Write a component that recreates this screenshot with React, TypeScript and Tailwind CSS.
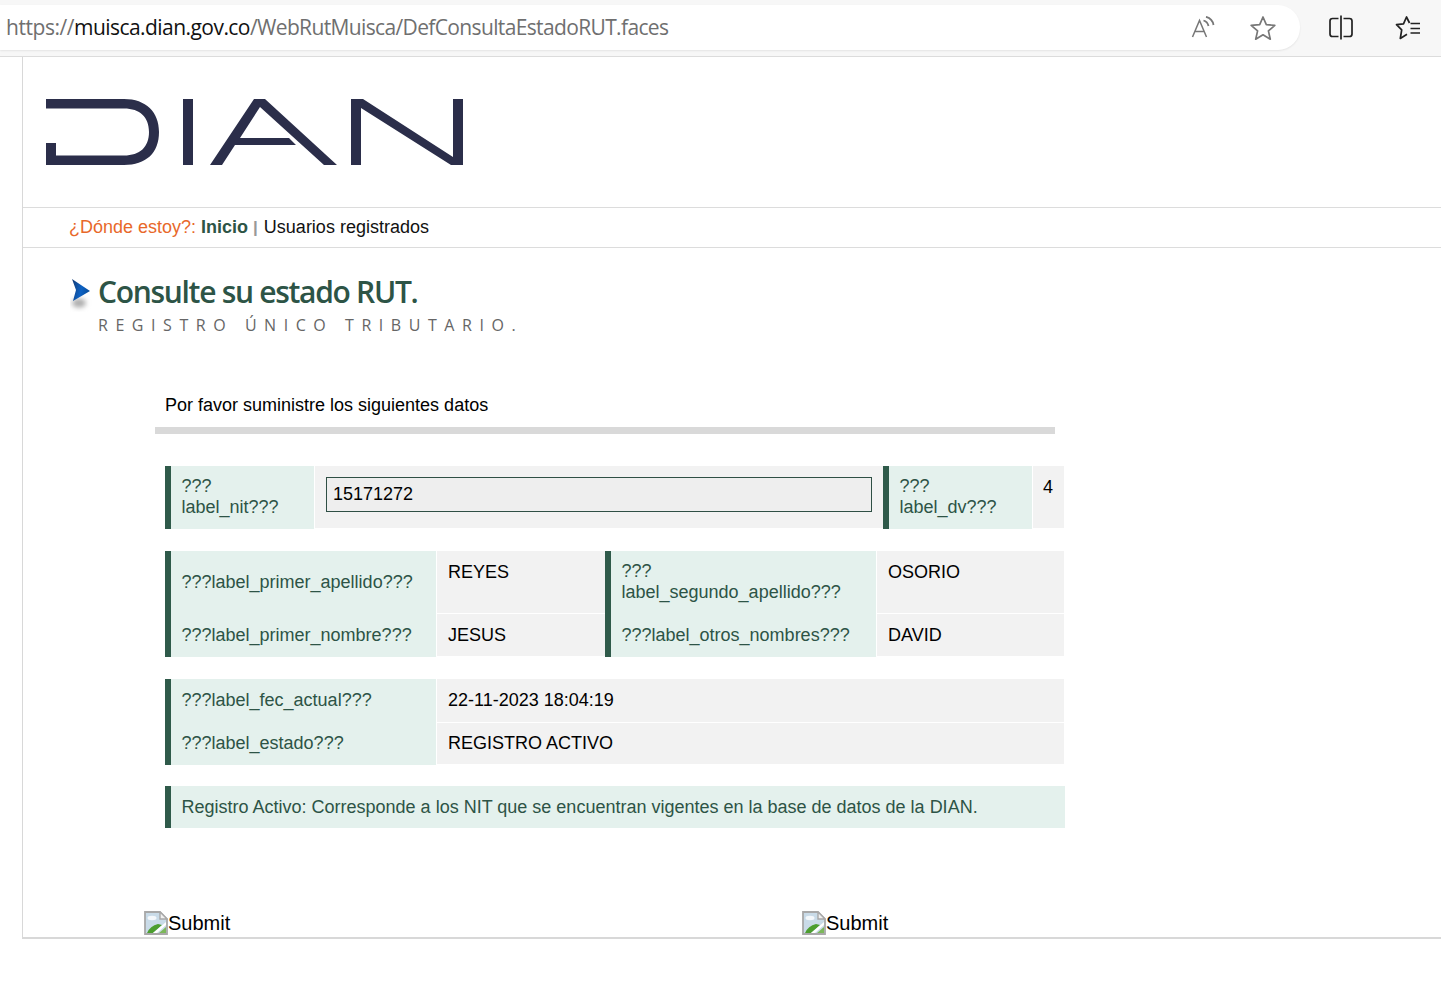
// App.tsx
function ReadAloudIcon() {
  return (
    <svg width="24" height="24" viewBox="0 0 24 24" fill="none" stroke="#777" strokeWidth="1.5" className="shrink-0">
      <path d="M1.500 21 L8.500 4.500 L15.500 21 M3.800 15.500 H13.200" />
      <path d="M12.500 4.500 Q16.500 5.500 17.500 10" strokeWidth="1.8" />
      <path d="M15 0.800 Q21.500 2.500 22.500 9" strokeWidth="1.8" />
    </svg>
  )
}

function StarIcon() {
  return (
    <svg width="26" height="26" viewBox="0 0 26 26" fill="none" stroke="#777" strokeWidth="1.7" strokeLinejoin="round" className="ml-[35px] shrink-0">
      <path d="M13 2 L16.300 9.700 L24.800 10.400 L18.400 15.900 L20.300 24.200 L13 19.800 L5.700 24.200 L7.600 15.900 L1.200 10.400 L9.700 9.700 Z" />
    </svg>
  )
}

function SplitIcon() {
  return (
    <svg width="24" height="26" viewBox="0 0 24 26" fill="none" stroke="#222" strokeWidth="1.7" className="shrink-0">
      <path d="M9.500 3.500 H3.500 Q1 3.500 1 6 V19 Q1 21.500 3.500 21.500 H9.500" />
      <path d="M14.500 3.500 H20.500 Q23 3.500 23 6 V19 Q23 21.500 20.500 21.500 H14.500" />
      <path d="M12 0.500 V24.500" />
    </svg>
  )
}

function FavoritesIcon() {
  return (
    <svg width="26" height="24" viewBox="0 0 26 24" fill="none" stroke="#222" strokeWidth="1.7" strokeLinejoin="round" className="shrink-0">
      <path d="M14.500 7 L11.500 1 L8.500 7.800 L1.500 8.700 L6.700 13.800 L5.300 22.500 L12 18.300" />
      <path d="M15.500 7.500 H25 M15.500 12.500 H25 M15.500 17 H25" />
    </svg>
  )
}

function DianLogo() {
  return (
    <svg width="418" height="68" viewBox="0 0 418 68" fill="#2b2e4a" className="block">
      <path d="M0 0 H78 C100 0 113 13 113 33 C113 54 100 66 78 66 H0 V44 H10 V56.500 H78 C94 56.500 103 48 103 33 C103 18 94 9.500 78 9.500 H0 Z" />
      <rect x="137" y="0" width="10" height="66" />
      <path d="M164 66 L208 0 H219 L291 66 H278 L214 8 L194 39 H243 L250 46 H189 L176 66 Z" />
      <path d="M305 66 V0 H317 L407 58 V0 H417 V66 H405 L315 9 V66 Z" />
    </svg>
  )
}

function TitleArrow() {
  return (
    <svg width="24" height="36" viewBox="0 0 24 36" className="shrink-0">
      <defs>
        <linearGradient id="arrowFill" x1="0" y1="0" x2="1" y2="0.3">
          <stop offset="0" stopColor="#123a74" />
          <stop offset="0.6" stopColor="#0d62c4" />
          <stop offset="1" stopColor="#0a4f9e" />
        </linearGradient>
        <filter id="arrowShadow" x="-50%" y="-50%" width="200%" height="200%">
          <feGaussianBlur stdDeviation="2.500" />
        </filter>
      </defs>
      <ellipse cx="9" cy="27" rx="7" ry="4.500" fill="#aaa" filter="url(#arrowShadow)" />
      <path d="M2 3 L20 15 L3 25 L6 14 Z" fill="url(#arrowFill)" />
    </svg>
  )
}

function BrokenImage() {
  return (
    <svg width="24" height="24" viewBox="0 0 24 24" className="shrink-0">
      <path d="M1 1 H16 L23 8 V23 H1 Z" fill="#c9dbe8" stroke="#a8a8a8" strokeWidth="1.800" />
      <ellipse cx="8" cy="7" rx="4.500" ry="2.200" fill="#f4f8fb" />
      <path d="M3 22 Q6 15 14 13 L18 14 L9 22 Z" fill="#4c9e2f" />
      <path d="M9 22 L22 11 V14 L13 22 Z" fill="#fff" />
      <path d="M15 22 L22 16 V22 Z" fill="#7cb85a" />
      <path d="M16 1 V8 H23 Z" fill="#f0f0f0" stroke="#a8a8a8" strokeWidth="1.400" />
    </svg>
  )
}

function Label({ children }: { children: React.ReactNode }) {
  return (
    <div className="flex items-center bg-[#e4f1ed] text-[#2d5446] pl-[10.500px] pr-2 leading-[21px] border-l-[6px] border-[#2f5a4a]">
      <div>{children}</div>
    </div>
  )
}

function Value({ children, top = false }: { children: React.ReactNode; top?: boolean }) {
  return (
    <div className={`bg-[#f2f2f2] pl-[11px] text-black ${top ? 'pt-[8px]' : 'flex items-center'}`}>
      {children}
    </div>
  )
}

export default function App() {
  return (
    <div className="w-[1441px] h-[997px] bg-white overflow-hidden font-['Liberation_Sans',sans-serif] text-[18px]">
      {/* Browser bar */}
      <div className="h-[57px] bg-[#f7f7f7] border-b border-[#dcdcdc] pt-[5px] flex items-start">
        <div className="w-[1300px] h-[45px] bg-white rounded-r-[22px] flex items-center pl-[6px] pr-[24px] shadow-[0_1px_2px_rgba(0,0,0,0.08)]">
          <div className="flex-1 font-['Open_Sans',sans-serif] text-[21px] tracking-[-0.64px] text-[#6f6f6f] whitespace-nowrap">
            <span className="tracking-[-0.45px]">https://</span><span className="text-[#111] tracking-[-0.55px]">muisca.dian.gov.co</span>/WebRutMuisca/DefConsultaEstadoRUT.faces
          </div>
          <ReadAloudIcon />
          <StarIcon />
        </div>
        <div className="flex items-center h-[45px] ml-[29px]">
          <SplitIcon />
          <div className="ml-[42px]"><FavoritesIcon /></div>
        </div>
      </div>

      {/* Page */}
      <div className="ml-[22px] h-[882px] border-l border-b-2 border-[#d8d8d8] overflow-hidden">
        <div className="h-[150px] pt-[42px] pl-[23px]">
          <DianLogo />
        </div>

        <div className="h-[41px] border-y border-[#dcdcdc] pl-[46px] flex items-center whitespace-nowrap">
          <span className="text-[#e8682a]">¿Dónde estoy?:</span>
          <span className="ml-[5px] font-bold text-[#2d5446]">Inicio</span>
          <span className="ml-[5px] mr-[6px] font-bold text-[#999] text-[17px]">|</span>
          <span className="text-[#111]">Usuarios registrados</span>
        </div>

        <div className="flex pl-[47px] pt-[28px]">
          <TitleArrow />
          <div className="ml-[4px]">
            <h1 className="font-['Open_Sans',sans-serif] font-semibold text-[30px] leading-[32px] tracking-[-1.3px] text-[#2d5446]">Consulte su estado RUT.</h1>
            <p className="mt-[6px] font-['Open_Sans',sans-serif] text-[16px] leading-[22px] tracking-[7.55px] text-[#666]">REGISTRO ÚNICO TRIBUTARIO.</p>
          </div>
        </div>

        <div className="ml-[132px] w-[900px] mt-[59px]">
          <p className="pl-[10px] leading-[21px]">Por favor suministre los siguientes datos</p>
          <div className="mt-[11px] h-[7px] bg-[#d9d9d9]" />
        </div>

        <div className="ml-[142px] w-[899px]">
          {/* NIT */}
          <div className="mt-[32px] grid grid-cols-[149px_1px_568px_149px_1px_31px] h-[63px]">
            <Label><div className="-mt-[2px]">???<br />label_nit???</div></Label>
            <div />
            <div className="bg-[#f2f2f2] mb-px pl-[11px] pr-[11px] pt-[11px]">
              <div className="h-[35px] bg-[#eeeeee] border border-[#2f4f45] flex items-center pl-[6px]">15171272</div>
            </div>
            <Label><div className="-mt-[2px]">???<br />label_dv???</div></Label>
            <div />
            <div className="bg-[#f2f2f2] mb-px pl-[10px] pt-[8px]">4</div>
          </div>

          {/* Nombres */}
          <div className="mt-[22px] grid grid-cols-[271px_1px_168px_271px_1px_187px] grid-rows-[62px_44px]">
            <Label>???label_primer_apellido???</Label>
            <div />
            <Value top>REYES</Value>
            <Label>???<br />label_segundo_apellido???</Label>
            <div />
            <Value top>OSORIO</Value>
            <Label>???label_primer_nombre???</Label>
            <div />
            <div className="border-t border-white"><Value><span className="h-[42px] flex items-center">JESUS</span></Value></div>
            <Label>???label_otros_nombres???</Label>
            <div />
            <div className="border-t border-white"><Value><span className="h-[42px] flex items-center">DAVID</span></Value></div>
          </div>

          {/* Fecha y estado */}
          <div className="mt-[22px] grid grid-cols-[271px_1px_627px] grid-rows-[43px_43px]">
            <Label>???label_fec_actual???</Label>
            <div />
            <Value>22-11-2023 18:04:19</Value>
            <Label>???label_estado???</Label>
            <div />
            <div className="border-t border-white"><Value><span className="h-[41px] flex items-center">REGISTRO ACTIVO</span></Value></div>
          </div>

          {/* Aviso */}
          <div className="mt-[21px] h-[42px] w-[900px] flex items-center bg-[#e4f1ed] text-[#2d5446] pl-[10.500px] border-l-[6px] border-[#2f5a4a] whitespace-nowrap">
            Registro Activo: Corresponde a los NIT que se encuentran vigentes en la base de datos de la DIAN.
          </div>
        </div>

        <div className="mt-[83px] ml-[121px] flex text-[20px] leading-[24px] text-black">
          <div className="w-[658px] flex items-center"><BrokenImage />Submit</div>
          <div className="flex items-center"><BrokenImage />Submit</div>
        </div>
      </div>
    </div>
  )
}
